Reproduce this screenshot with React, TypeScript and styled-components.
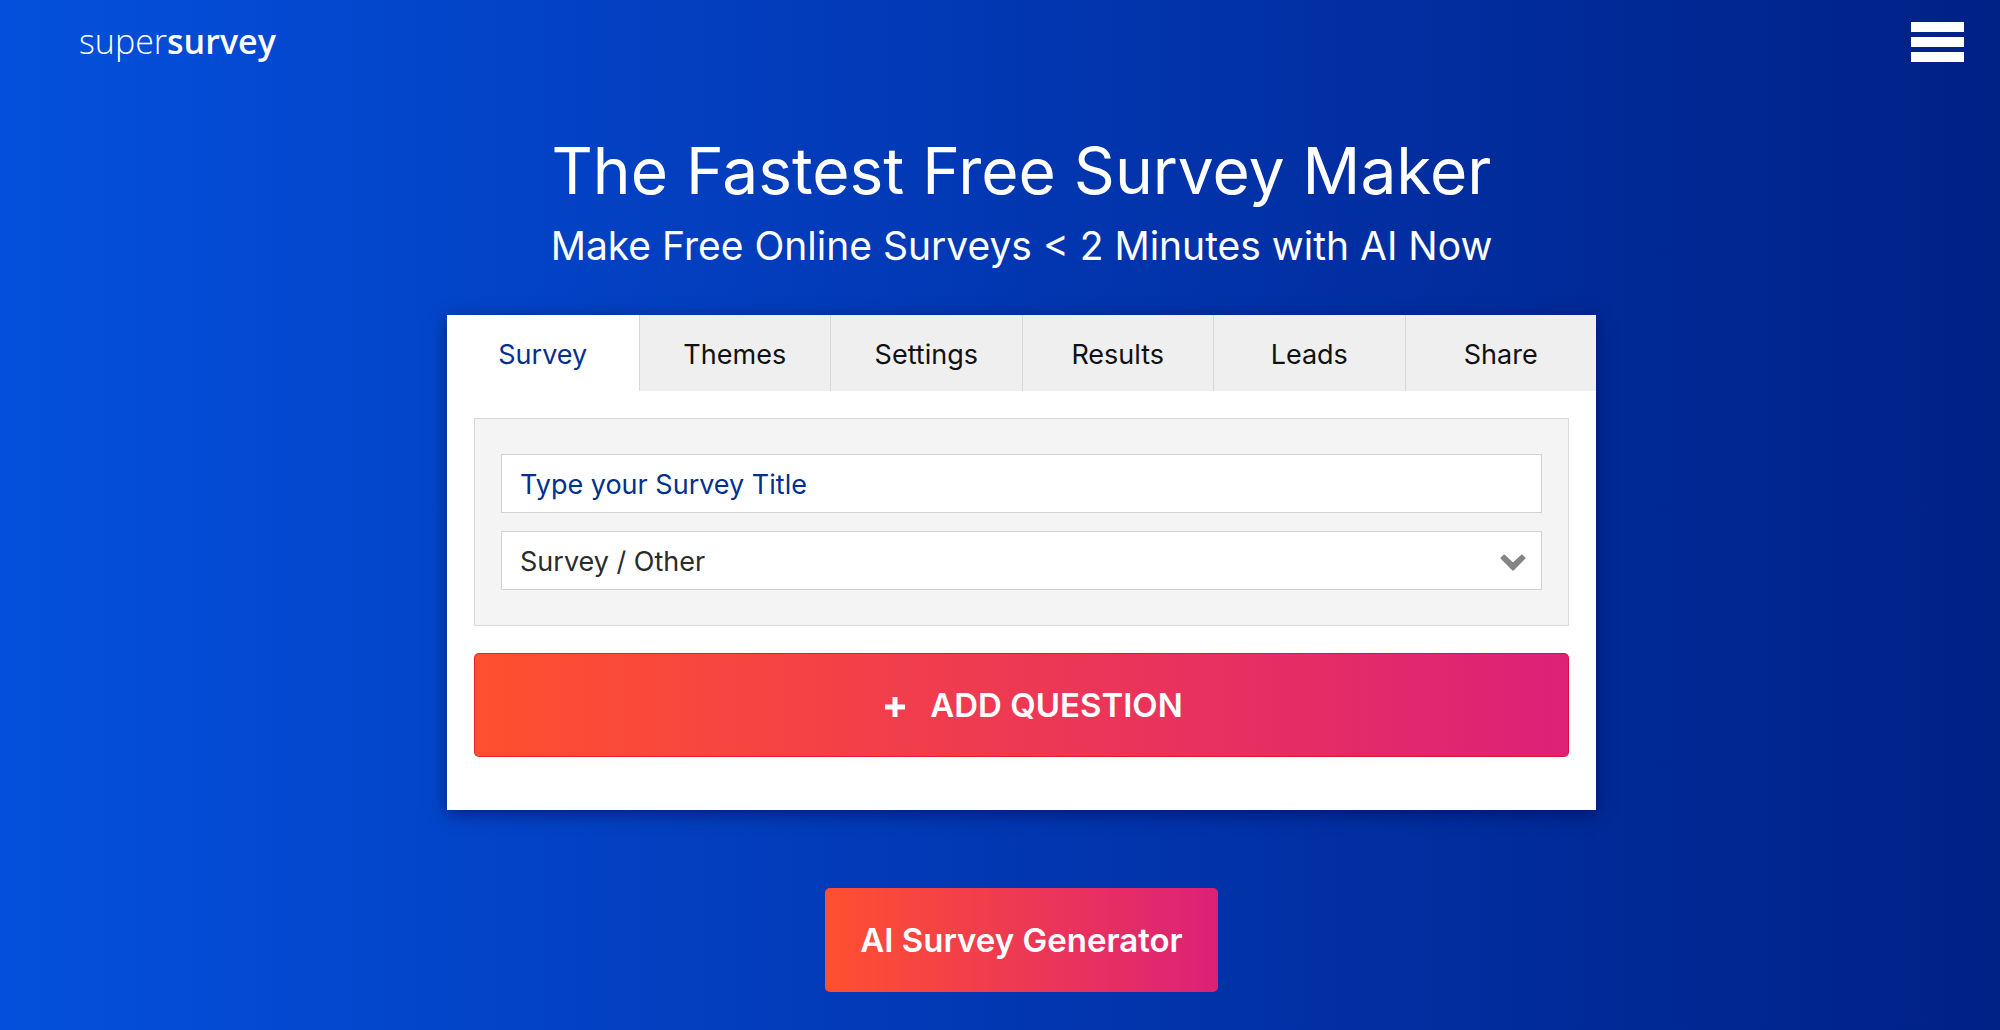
import React from "react";
import styled, { createGlobalStyle } from "styled-components";

const GlobalStyle = createGlobalStyle`
  *, *::before, *::after { box-sizing: border-box; }
  body {
    margin: 0;
    font-family: Inter, "Liberation Sans", sans-serif;
    background: #001f85;
  }
  button, input, select { font: inherit; margin: 0; }
`;

const Page = styled.div`
  min-height: 100vh;
  padding: 0 36px 38px 79px;
  background: linear-gradient(90deg, #0450dc 0%, #0237b2 50%, #002186 100%);
`;

const Header = styled.header`
  display: flex;
  align-items: flex-start;
  justify-content: space-between;
  height: 86px;
  padding-top: 20px;
`;

const Logo = styled.a`
  color: #fff;
  font-family: "Open Sans", "Noto Sans", sans-serif;
  font-size: 34px;
  font-weight: 300;
  line-height: 42px;
  text-decoration: none;

  strong { font-weight: 600; }
`;

const MenuButton = styled.button`
  display: flex;
  flex-direction: column;
  gap: 5px;
  width: 53px;
  padding: 2px 0 0;
  border: 0;
  background: none;
  cursor: pointer;
`;

const MenuBar = styled.span`
  width: 100%;
  height: 10px;
  background: #fff;
`;

const Hero = styled.main`
  display: flex;
  flex-direction: column;
  align-items: center;
  padding-top: 40px;
`;

const Title = styled.h1`
  margin: 0;
  color: #fff;
  font-size: 64px;
  font-weight: 400;
  line-height: 90px;
  text-align: center;
`;

const Subtitle = styled.h2`
  margin: 0 0 39px;
  color: #fff;
  font-size: 39px;
  font-weight: 400;
  line-height: 60px;
  text-align: center;
`;

const Card = styled.section`
  width: 100%;
  max-width: 1149px;
  background: #fff;
  box-shadow: 0 4px 16px rgba(0, 0, 60, 0.5);
`;

const Tabs = styled.div`
  display: grid;
  grid-template-columns: repeat(6, 1fr);
`;

const Tab = styled.button<{ $active?: boolean }>`
  height: 76px;
  padding: 4px 0 0;
  border: 0;
  border-left: ${({ $active }) => ($active ? "0" : "1px solid #d8d8d8")};
  background: ${({ $active }) => ($active ? "#fff" : "#efefef")};
  color: ${({ $active }) => ($active ? "#02308f" : "#111")};
  font-size: 27px;
  line-height: 36px;
  cursor: pointer;
`;

const Editor = styled.form`
  display: flex;
  flex-direction: column;
  gap: 27px;
  padding: 27px 27px 53px;
`;

const Fields = styled.div`
  display: flex;
  flex-direction: column;
  gap: 18px;
  padding: 35px 26px;
  border: 1px solid #d9d9d9;
  background: #f4f4f4;
`;

const fieldHeight = "59px";

const TitleInput = styled.input`
  width: 100%;
  height: ${fieldHeight};
  padding: 2px 18px 0;
  border: 1px solid #d2d2d2;
  background: #fff;
  font-size: 27px;

  &::placeholder { color: #02308f; opacity: 1; }
`;

const SelectWrap = styled.div`
  display: grid;
  align-items: center;

  & > * { grid-area: 1 / 1; }
  & > svg { justify-self: end; margin-right: 15px; pointer-events: none; }
`;

const TypeSelect = styled.select`
  width: 100%;
  height: ${fieldHeight};
  padding: 2px 18px 0;
  border: 1px solid #d2d2d2;
  border-radius: 0;
  background: #fff;
  color: #2b2b2b;
  font-size: 27px;
  appearance: none;
`;

const ActionButton = styled.button`
  display: flex;
  align-items: center;
  justify-content: center;
  gap: 25px;
  height: 104px;
  padding: 0 35px;
  border: 0;
  border-radius: 5px;
  background: linear-gradient(90deg, #ff5030, #dc2177);
  color: #fff;
  font-size: 33px;
  font-weight: 600;
  line-height: 44px;
  cursor: pointer;
`;

const OutlinedAction = styled(ActionButton)`
  padding-left: 60px;
  border: 1px solid rgba(228, 0, 20, 0.6);
  background-origin: border-box;
`;

const GeneratorLink = styled(ActionButton).attrs({ as: "a", href: "#generator" })`
  margin-top: 78px;
  text-decoration: none;
`;

const tabs = ["Survey", "Themes", "Settings", "Results", "Leads", "Share"];

export default function App() {
  return (
    <>
      <GlobalStyle />
      <Page>
        <Header>
          <Logo href="#home">super<strong>survey</strong></Logo>
          <MenuButton type="button" aria-label="Menu">
            <MenuBar />
            <MenuBar />
            <MenuBar />
          </MenuButton>
        </Header>
        <Hero>
          <Title>The Fastest Free Survey Maker</Title>
          <Subtitle>Make Free Online Surveys &lt; 2 Minutes with AI Now</Subtitle>
          <Card>
            <Tabs role="tablist">
              {tabs.map((name, i) => (
                <Tab key={name} type="button" role="tab" aria-selected={i === 0} $active={i === 0}>
                  {name}
                </Tab>
              ))}
            </Tabs>
            <Editor onSubmit={(e) => e.preventDefault()}>
              <Fields>
                <TitleInput type="text" aria-label="Survey title" placeholder="Type your Survey Title" />
                <SelectWrap>
                  <TypeSelect aria-label="Survey type" defaultValue="other">
                    <option value="other">Survey / Other</option>
                  </TypeSelect>
                  <svg width="27" height="20" viewBox="0 0 27 20" fill="none" aria-hidden="true">
                    <path d="M1.4 7.2L4.2 4.4L13 12.6L21.8 4.4L24.6 7.2L13 18.8Z" fill="#858585" stroke="#858585" strokeWidth="1.8" strokeLinejoin="round" />
                  </svg>
                </SelectWrap>
              </Fields>
              <OutlinedAction type="submit">
                <svg width="20" height="24" viewBox="0 0 20 24" aria-hidden="true">
                  <path d="M7.5 4H12.5V11.5H20V16.5H12.5V24H7.5V16.5H0V11.5H7.5Z" fill="#fff" />
                </svg>
                ADD QUESTION
              </OutlinedAction>
            </Editor>
          </Card>
          <GeneratorLink>AI Survey Generator</GeneratorLink>
        </Hero>
      </Page>
    </>
  );
}
